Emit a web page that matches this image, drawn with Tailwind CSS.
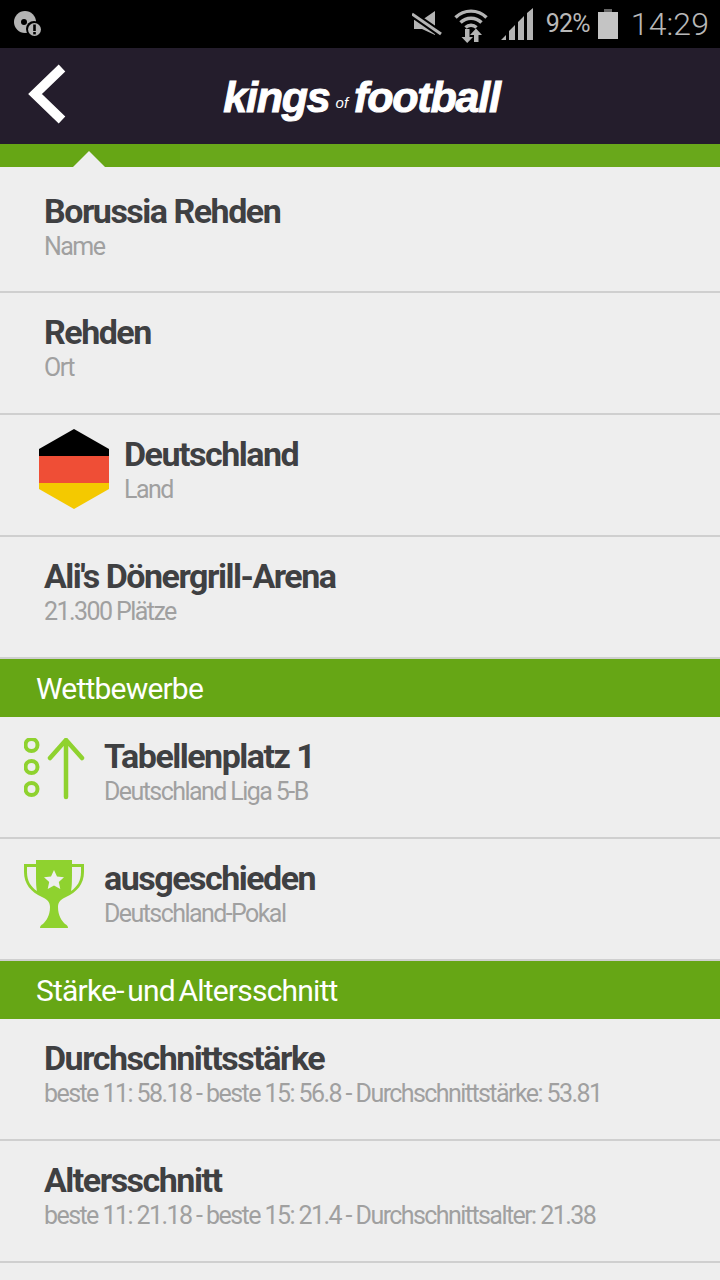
<!DOCTYPE html>
<html><head><meta charset="utf-8"><script src="https://cdn.jsdelivr.net/npm/@tailwindcss/browser@4"></script></head>
<body class="m-0">
<div class="w-[720px] h-[1280px] overflow-hidden bg-[#eeeeee] font-['Roboto',sans-serif]">
  <!-- status bar -->
  <div class="h-12 bg-black flex items-center relative">
    <svg class="ml-[12px] mt-[1px]" width="32" height="28" viewBox="0 0 32 28"><circle cx="13" cy="11" r="11" fill="#b4b4b4"/><circle cx="12" cy="11" r="3" fill="#000"/><circle cx="22" cy="18" r="8" fill="#000"/><circle cx="22.500" cy="18.500" r="6.500" fill="#b4b4b4"/><rect x="21.200" y="13.500" width="2.600" height="6.500" fill="#000"/><rect x="21.200" y="21" width="2.600" height="2.400" fill="#000"/></svg>
    <div class="ml-auto flex items-center h-12 text-[#b8b8b8]">
      <svg width="30" height="28" viewBox="0 0 30 28" class="mr-[12px] mt-[2px]"><path d="M2 9h8L23 0v24L10 18H2z" fill="#b4b4b4"/><path d="M0 3l29 20" stroke="#000" stroke-width="7"/><path d="M0 3l29 20" stroke="#b4b4b4" stroke-width="3"/></svg>
      <svg width="34" height="36" viewBox="0 0 34 36" class="mr-[12px] mt-[1px]"><path d="M1.500 10.500a22 22 0 0 1 31 0M6.500 15.500a15 15 0 0 1 21 0M11.500 20.500a8 8 0 0 1 11 0" fill="none" stroke="#b4b4b4" stroke-width="3.400"/><path d="M11 22h4.500v8H19l-5.800 6-5.700-6H11z" fill="#b4b4b4"/><path d="M22 21.500l6 6.500h-3.500v7h-4.500v-7h-4z" fill="#b4b4b4"/></svg>
      <svg width="34" height="32" viewBox="0 0 34 32" class="mr-[12px]"><path d="M1 32l5-5v5zM9 32V23l6-6v15zM18 32V14l6-6v24zM27 32V5l6-5v32z" fill="#b4b4b4"/></svg>
      <span class="text-[25px] tracking-[-0.8px] mr-[8px]">92%</span>
      <svg width="20" height="30" viewBox="0 0 20 30" class="mr-[13px]"><rect x="6" y="0" width="8" height="3" fill="#666"/><rect y="3" width="20" height="27" fill="#c4c4c4"/></svg>
      <span class="text-[32px] font-light tracking-[0.1px] mr-[11px]">14:29</span>
    </div>
  </div>
  <!-- header -->
  <div class="h-24 bg-[#241d2c] flex items-center relative">
    <svg class="absolute left-[27px] top-[16px]" width="40" height="60" viewBox="0 0 40 60"><path d="M35 4L8 30l27 26" fill="none" stroke="#fff" stroke-width="9.500"/></svg>
    <div class="w-full text-center text-white font-['Liberation_Sans'] italic font-bold tracking-[-1.200px] text-[43px] leading-none pl-[3px] mt-[2px] [-webkit-text-stroke:1px_white]">kings<span class="text-[15px] font-normal tracking-normal mx-[6px] relative top-[-4px] [-webkit-text-stroke:0]">of</span>football</div>
  </div>
  <!-- tab strip -->
  <div class="h-[23px] bg-[#66a615] relative">
    <div class="absolute left-[180px] right-0 top-0 bottom-0 bg-[#69a81b]"></div>
    <div class="absolute left-[73px] bottom-0 w-0 h-0 border-x-[16px] border-x-transparent border-b-[16px] border-b-[#eeeeee]"></div>
  </div>
  <!-- rows -->
  <div class="h-[126px] pt-[26px] pl-[44px] border-b-2 border-[#cfcfcf]">
    <div class="text-[34px] leading-[36px] font-bold tracking-[-1.500px] text-[#3f4042]">Borussia Rehden</div>
    <div class="text-[25px] leading-[36px] tracking-[-1.570px] text-[#a0a0a0]">Name</div>
  </div>
  <div class="h-[122px] pt-[21px] pl-[44px] border-b-2 border-[#cfcfcf]">
    <div class="text-[34px] leading-[36px] font-bold tracking-[-1.500px] text-[#3f4042]">Rehden</div>
    <div class="text-[25px] leading-[36px] tracking-[-1.570px] text-[#a0a0a0]">Ort</div>
  </div>
  <div class="h-[122px] pt-[21px] pl-[39px] border-b-2 border-[#cfcfcf] flex">
    <svg width="70" height="80" viewBox="0 0 70 80" class="mt-[-7px] mr-[15px]"><path d="M35 0L70 20V27H0V20z" fill="#000"/><path d="M0 27h70v27H0z" fill="#ef4e36"/><path d="M0 54h70v6L35 80 0 60z" fill="#f4c900"/></svg>
    <div>
      <div class="text-[34px] leading-[36px] font-bold tracking-[-1.500px] text-[#3f4042]">Deutschland</div>
      <div class="text-[25px] leading-[36px] tracking-[-1.570px] text-[#a0a0a0]">Land</div>
    </div>
  </div>
  <div class="h-[122px] pt-[21px] pl-[44px] border-b-2 border-[#cfcfcf]">
    <div class="text-[34px] leading-[36px] font-bold tracking-[-1.500px] text-[#3f4042]">Ali's Dönergrill-Arena</div>
    <div class="text-[25px] leading-[36px] tracking-[-1.570px] text-[#a0a0a0]">21.300 Plätze</div>
  </div>
  <div class="h-[58px] bg-[#66a615] pl-[36px] pt-[1px] flex items-center text-white text-[30px] tracking-[-0.800px] [word-spacing:-3px]">Wettbewerbe</div>
  <div class="h-[122px] pt-[21px] pl-[24px] border-b-2 border-[#cfcfcf] flex">
    <svg width="64" height="62" viewBox="0 0 64 62" class="mr-[16px] shrink-0"><g fill="none" stroke="#8fd22f" stroke-width="4"><circle cx="7.500" cy="7" r="6"/><circle cx="7.500" cy="29" r="6"/><circle cx="7.500" cy="51" r="6"/><path d="M42 59V2M26 20L42 2l16 18" stroke-linecap="round" stroke-linejoin="round" stroke-width="4.500"/></g></svg>
    <div>
      <div class="text-[34px] leading-[36px] font-bold tracking-[-1.500px] text-[#3f4042]">Tabellenplatz 1</div>
      <div class="text-[25px] leading-[36px] tracking-[-1.570px] text-[#a0a0a0]">Deutschland Liga 5-B</div>
    </div>
  </div>
  <div class="h-[122px] pt-[21px] pl-[24px] border-b-2 border-[#cfcfcf] flex">
    <svg width="60" height="68" viewBox="0 0 60 68" class="mr-[20px] shrink-0"><path d="M12 0h36v4h12v8c0 12-7 20-18 25-4 2-8 4-8 10 0 9 4 14 7 17 2 1 3 2 3 4H16c0-2 1-3 3-4 3-3 7-8 7-17 0-6-4-8-8-10C7 32 0 24 0 12V4h12zM3 7v5c0 9 4 15 10 19-1-5-1-9-1-24zM57 7h-9c0 15 0 19-1 24 6-4 10-10 10-19z" fill="#8fd22f" fill-rule="evenodd"/><path d="M30 10l3 6.500 7 .8-5.200 4.700 1.500 7L30 25.500 23.700 29l1.500-7-5.200-4.700 7-.8z" fill="#eee"/></svg>
    <div>
      <div class="text-[34px] leading-[36px] font-bold tracking-[-1.500px] text-[#3f4042]">ausgeschieden</div>
      <div class="text-[25px] leading-[36px] tracking-[-1.570px] text-[#a0a0a0]">Deutschland-Pokal</div>
    </div>
  </div>
  <div class="h-[58px] bg-[#66a615] pl-[36px] pt-[1px] flex items-center text-white text-[30px] tracking-[-0.800px] [word-spacing:-3px]">Stärke- und Altersschnitt</div>
  <div class="h-[122px] pt-[21px] pl-[44px] border-b-2 border-[#cfcfcf]">
    <div class="text-[34px] leading-[36px] font-bold tracking-[-1.500px] text-[#3f4042]">Durchschnittsstärke</div>
    <div class="text-[25px] leading-[36px] tracking-[-1.570px] text-[#a0a0a0]">beste 11: 58.18 - beste 15: 56.8 - Durchschnittstärke: 53.81</div>
  </div>
  <div class="h-[122px] pt-[21px] pl-[44px] border-b-2 border-[#cfcfcf]">
    <div class="text-[34px] leading-[36px] font-bold tracking-[-1.500px] text-[#3f4042]">Altersschnitt</div>
    <div class="text-[25px] leading-[36px] tracking-[-1.570px] text-[#a0a0a0]">beste 11: 21.18 - beste 15: 21.4 - Durchschnittsalter: 21.38</div>
  </div>
</div>
</body></html>
